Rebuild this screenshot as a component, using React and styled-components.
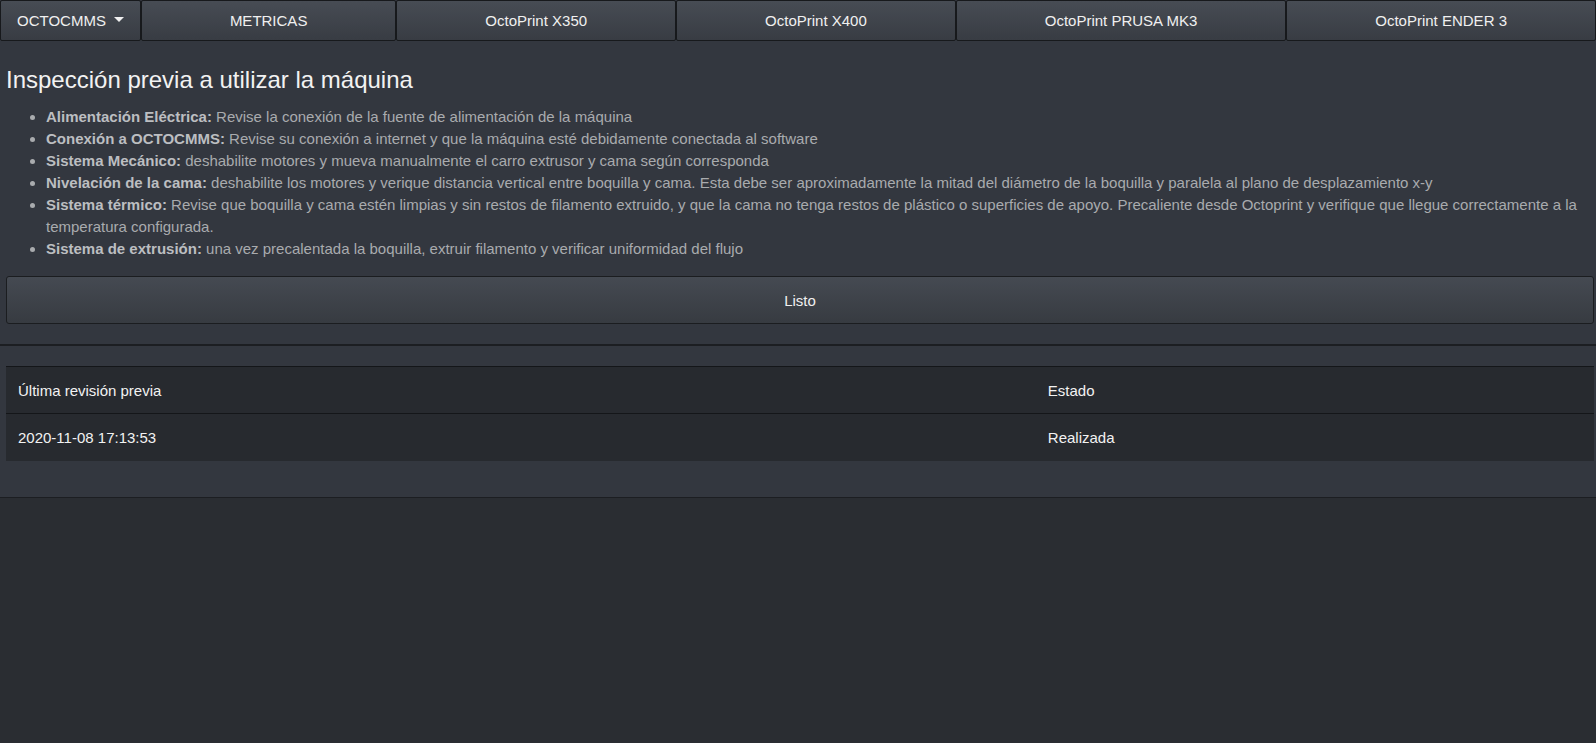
import React from "react";
import styled, { createGlobalStyle } from "styled-components";

const Global = createGlobalStyle`
  html, body {
    margin: 0;
    padding: 0;
    background: #2a2d32;
    font-family: "Liberation Sans", Arial, sans-serif;
  }
  * { box-sizing: border-box; }
`;

const Page = styled.div`
  min-height: 743px;
  background: #2a2d32;
`;

const Nav = styled.nav`
  display: flex;
  background: #34383f;
`;

const NavButton = styled.button`
  flex: ${(p) => (p.fixed ? "0 0 auto" : "1 1 auto")};
  height: 41px;
  padding: 0 ${(p) => (p.fixed ? "16px" : "12px")};
  border: 1px solid #17191c;
  border-radius: 2px;
  background: linear-gradient(#474c54, #383c43);
  color: #f0f0f0;
  font-family: inherit;
  font-size: 15px;
  display: flex;
  align-items: center;
  justify-content: center;
  gap: 8px;
`;

const Caret = styled.span`
  width: 0;
  height: 0;
  border-left: 5px solid transparent;
  border-right: 5px solid transparent;
  border-top: 5px solid #f0f0f0;
  margin-top: -2px;
`;

const Main = styled.main`
  background: #33373f;
  padding: 24px 2px 20px 6px;
  border-bottom: 2px solid #1c1e22;
`;

const Title = styled.h2`
  margin: 0 0 12px;
  font-size: 24px;
  font-weight: normal;
  line-height: 29px;
  color: #f2f2f2;
`;

const List = styled.ul`
  margin: 0;
  padding-left: 40px;
  color: #a9abae;
  font-size: 15px;
  line-height: 22px;
`;

const Label = styled.b`
  color: #bcbec1;
`;

const Button = styled.button`
  display: block;
  width: 100%;
  height: 48px;
  margin-top: 16px;
  border: 1px solid #1b1d20;
  border-radius: 3px;
  background: linear-gradient(#454a52, #373b41);
  color: #f0f0f0;
  font-family: inherit;
  font-size: 15px;
`;

const Panel = styled.section`
  background: #33373f;
  padding: 20px 2px 36px 6px;
  border-bottom: 1px solid #1c1e22;
`;

const Table = styled.table`
  width: 100%;
  border-collapse: collapse;
  background: #272a2f;
  color: #f2f2f2;
  font-size: 15px;
`;

const Cell = styled.td`
  height: 47px;
  padding: 0 12px;
  border-top: 1px solid #141619;
  text-align: left;
`;

const items = [
  ["Alimentación Eléctrica:", "Revise la conexión de la fuente de alimentación de la máquina"],
  ["Conexión a OCTOCMMS:", "Revise su conexión a internet y que la máquina esté debidamente conectada al software"],
  ["Sistema Mecánico:", "deshabilite motores y mueva manualmente el carro extrusor y cama según corresponda"],
  ["Nivelación de la cama:", "deshabilite los motores y verique distancia vertical entre boquilla y cama. Esta debe ser aproximadamente la mitad del diámetro de la boquilla y paralela al plano de desplazamiento x-y"],
  ["Sistema térmico:", "Revise que boquilla y cama estén limpias y sin restos de filamento extruido, y que la cama no tenga restos de plástico o superficies de apoyo. Precaliente desde Octoprint y verifique que llegue correctamente a la temperatura configurada."],
  ["Sistema de extrusión:", "una vez precalentada la boquilla, extruir filamento y verificar uniformidad del flujo"],
];

const printers = ["METRICAS", "OctoPrint X350", "OctoPrint X400", "OctoPrint PRUSA MK3", "OctoPrint ENDER 3"];

export default function App() {
  return (
    <Page>
      <Global />
      <Nav>
        <NavButton fixed>
          OCTOCMMS <Caret />
        </NavButton>
        {printers.map((p) => (
          <NavButton key={p}>{p}</NavButton>
        ))}
      </Nav>
      <Main>
        <Title>Inspección previa a utilizar la máquina</Title>
        <List>
          {items.map(([label, text]) => (
            <li key={label}>
              <Label>{label}</Label> {text}
            </li>
          ))}
        </List>
        <Button>Listo</Button>
      </Main>
      <Panel>
        <Table>
          <tbody>
            <tr>
              <Cell>Última revisión previa</Cell>
              <Cell>Estado</Cell>
            </tr>
            <tr>
              <Cell>2020-11-08 17:13:53</Cell>
              <Cell>Realizada</Cell>
            </tr>
          </tbody>
        </Table>
      </Panel>
    </Page>
  );
}
